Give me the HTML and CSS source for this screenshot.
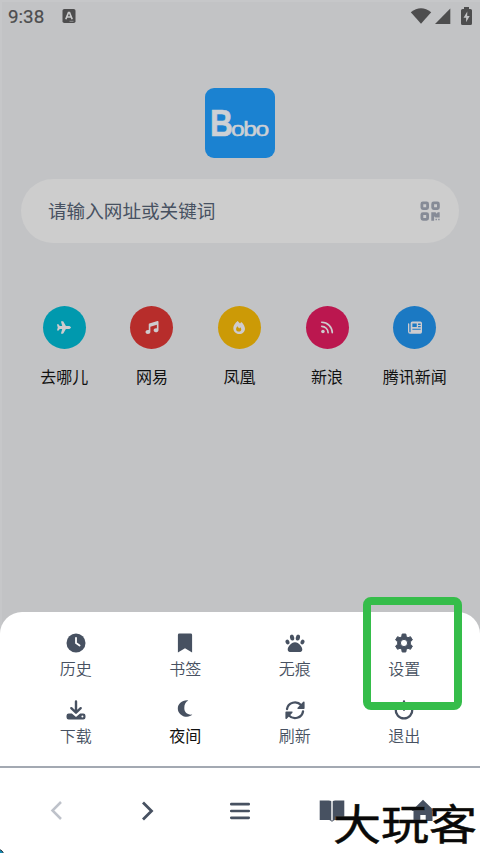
FILE: index.html
```html
<!DOCTYPE html>
<html lang="zh-CN">
<head>
<meta charset="utf-8">
<meta name="viewport" content="width=device-width">
<title>Bobo</title>
<link rel="stylesheet" href="styles.css">
</head>
<body>
<div class="screen">
  <header class="status">
    <span class="time">9:38</span>
    <svg class="badge" viewBox="0 0 14 14"><rect width="13" height="14" x=".5" rx="1.8" fill="#4d4d4e"/><path d="M3.8 10.200 6.500 3.500h1l2.700 6.700M4.800 8h4.400" fill="none" stroke="#c9cacb" stroke-width="1.700"/><path d="M7.500 12.300h4" stroke="#929394"/></svg>
    <div class="signals">
      <svg width="22" height="16" viewBox="0 0 22 16"><path d="M.8 4.200Q11-3.600 21.200 4.200L11 15.700Z" fill="#4d4d4e"/></svg>
      <svg class="cell" width="16" height="16" viewBox="0 0 16 16"><path d="M0 16 15.300.4V16Z" fill="#4d4d4e"/></svg>
      <svg class="battery" width="11" height="18" viewBox="0 0 11 18"><path d="M3 0h5v2h1.500Q11 2 11 3.500v13Q11 18 9.500 18h-8Q0 18 0 16.500v-13Q0 2 1.500 2H3Z" fill="#4d4d4e"/><path d="M6.300 4.500 2.500 10.700h2.600v4.500l3.600-6.300H6.200Z" fill="#c2c3c5"/></svg>
    </div>
  </header>

  <main class="home">
    <div class="logo"><span class="logo-b">B</span><span class="logo-rest">obo</span></div>
    <div class="search">
      <span class="hint">请输入网址或关键词</span>
      <svg width="20" height="20" viewBox="0 0 20 20"><g fill="none" stroke="#868b96" stroke-width="2.800"><rect x="1.900" y="1.900" width="5.700" height="5.700" rx="1"/><rect x="12.700" y="1.900" width="5.700" height="5.700" rx="1"/><rect x="1.900" y="12.600" width="5.700" height="5.700" rx="1"/></g><path d="M11.300 11.200h4.200l1.200 1.600 1-1.600h2v5.300h-4.300l-1.300-1.200v4.500h-2.800Z" fill="#868b96"/><path d="M15.500 18.500h1.400m1.300 0h1.400" stroke="#868b96" stroke-width="1.500"/></svg>
    </div>
    <nav class="sites">
      <a class="site"><i class="dot cyan"><svg viewBox="0 0 576 512"><path d="M482 192c29 0 94 29 94 64 0 36-65 64-94 64H366L265 496c-6 10-16 16-28 16h-56c-11 0-18-10-15-20l49-172H112l-43 58c-3 4-8 6-13 6H14c-8 0-14-6-14-14l1-4 31-112L1 144l-1-4c0-8 6-14 14-14h42c5 0 10 2 13 6l43 60h103L166 20c-3-10 4-20 15-20h56c12 0 22 6 28 16l101 176Z"/></svg></i><span>去哪儿</span></a>
      <a class="site"><i class="dot red"><svg viewBox="0 0 512 512"><path d="M499 6c8 6 13 16 13 26v336c0 44-43 80-96 80s-96-36-96-80 43-80 96-80c11 0 22 2 32 5V147L192 223v209c0 44-43 80-96 80S0 476 0 432s43-80 96-80c11 0 22 2 32 5V128c0-14 9-26 23-31L471 1c10-3 20-1 28 5Z"/></svg></i><span>网易</span></a>
      <a class="site"><i class="dot yellow"><svg viewBox="0 0 448 512"><path fill-rule="evenodd" d="M159 5c6-6 16-6 23 0 31 29 60 61 86 95 11-16 25-33 40-47 6-6 16-6 22 0 39 37 71 85 93 129 22 44 37 88 37 120 0 116-99 210-227 210C99 512 0 417 0 276c0-43 17-92 46-140C74 90 113 45 159 5Zm67 411c49 0 87-34 87-80 0-33-18-62-40-91l-41 52-72-93c-31 40-51 75-51 119 0 58 49 93 117 93Z"/></svg></i><span>凤凰</span></a>
      <a class="site"><i class="dot pink"><svg viewBox="0 0 16 16"><circle cx="3" cy="13" r="2.200"/><path d="M1.500 6.600A8 8 0 0 1 9.400 14.500M1.500 1.500A13 13 0 0 1 14.500 14.500" fill="none" stroke="#cecbce" stroke-width="2" stroke-linecap="round"/></svg></i><span>新浪</span></a>
      <a class="site"><i class="dot blue"><svg viewBox="0 0 16 14"><path fill-rule="evenodd" d="M5 0h9q2 0 2 2v10q0 2-2 2H2.500Q0 14 0 11.500V3q0-1 .7-1t.8 1v8.500q0 1 .75 1t.75-1V2q0-2 2-2Zm0 2.500v4h5v-4Zm6.500 0V4h3V2.500Zm0 2.800v1.400h3V5.300ZM5 8.300v1.200h9.500V8.300Z"/></svg></i><span>腾讯新闻</span></a>
    </nav>
  </main>

  <section class="sheet">
    <div class="menu">
      <a class="item"><svg viewBox="0 0 20 20"><circle cx="10" cy="10" r="9.500"/><path d="M10 4.800V10l3.600 2.500" fill="none" stroke="#fff" stroke-width="1.800" stroke-linecap="round"/></svg><span>历史</span></a>
      <a class="item"><svg viewBox="0 0 20 20"><path d="M4.300.5h11.400q1.400 0 1.400 1.400v17.600L10 15.200l-7.100 4.300V1.900Q2.900.5 4.300.5Z"/></svg><span>书签</span></a>
      <a class="item"><svg viewBox="0 0 20 20"><ellipse cx="7.100" cy="4.600" rx="2.100" ry="3" transform="rotate(-12 7.100 4.600)"/><ellipse cx="12.900" cy="4.600" rx="2.100" ry="3" transform="rotate(12 12.900 4.600)"/><ellipse cx="2.500" cy="9" rx="1.900" ry="2.500" transform="rotate(-22 2.500 9)"/><ellipse cx="17.500" cy="9" rx="1.900" ry="2.500" transform="rotate(22 17.500 9)"/><path d="M10 9.200c4 0 7.300 4.800 7.300 7.300 0 3-2.800 2.600-4.300 2.500q-3-.2-6 0c-1.500.1-4.300.5-4.300-2.500 0-2.500 3.300-7.300 7.300-7.300Z"/></svg><span>无痕</span></a>
      <a class="item"><svg viewBox="0 0 20 20"><path fill-rule="evenodd" stroke="#475161" stroke-linejoin="round" d="M8.200 1h3.600l.5 2.700 1.700 1 2.500-1 1.900 3.200-2.100 1.900v2.400l2.100 1.900-1.900 3.200-2.500-1-1.700 1-.5 2.700H8.200l-.5-2.700-1.700-1-2.500 1-1.900-3.200 2.100-1.900V8.800L1.600 6.900l1.900-3.200 2.500 1 1.700-1ZM10 6.400a3.600 3.600 0 1 0 0 7.200 3.600 3.600 0 0 0 0-7.200Z"/></svg><span>设置</span></a>
      <a class="item"><svg viewBox="0 0 20 20"><path d="M10 1.400v11M5.300 8.200 10 12.700l4.700-4.500" fill="none" stroke="#475161" stroke-width="2.400" stroke-linecap="round" stroke-linejoin="round"/><path fill-rule="evenodd" d="M2.700 13.500h3.200L10 16.900l4.100-3.400h3.200q2.200 0 2.200 2.200v1.600q0 2.200-2.200 2.200H2.700Q.5 19.500.5 17.300v-1.600q0-2.200 2.200-2.200Zm13.700 2a1 1 0 1 0 0 2 1 1 0 0 0 0-2Z"/></svg><span>下载</span></a>
      <a class="item dark"><svg viewBox="0 0 20 20"><path d="M12 .2C6.700.2 2.800 3.900 2.800 8.400s3.900 8.300 9.200 8.300c2.100 0 3.900-.8 5.300-2.100-5 .6-8-2.200-8-6.500 0-3.600 1.200-6 4-7.500Q12.700.2 12 .2Z"/></svg><span>夜间</span></a>
      <a class="item"><svg viewBox="0 0 20 20"><g fill="none" stroke="#475161" stroke-width="2.300" stroke-linecap="round"><path d="M2 9C3 2.500 11.500.1 16.300 5.300M18 11.500c-1 6.500-9.500 8.900-14.300 3.700"/></g><path d="M18.200 1.800q1.400-.8 1.400.8v5.600q0 .8-.8.8h-5.600q-1.500 0-.6-1.200ZM1.800 18.700q-1.400.8-1.400-.8v-5.600q0-.8.800-.8h5.600q1.500 0 .6 1.200Z"/></svg><span>刷新</span></a>
      <a class="item"><svg viewBox="0 0 20 20"><path d="M10 1.500v8.300M5 3.500a8.300 8.300 0 1 0 10 0" fill="none" stroke="#475161" stroke-width="2.300" stroke-linecap="round"/></svg><span>退出</span></a>
    </div>
    <nav class="toolbar">
      <a><svg viewBox="0 0 24 24"><path d="M16 3 7.500 11.500 16 20" fill="none" stroke="#bec2ca" stroke-width="2.500"/></svg></a>
      <a><svg viewBox="0 0 24 24"><path d="m7 3.500 8.500 8.500L7 20.500" fill="none" stroke="#475161" stroke-width="2.800"/></svg></a>
      <a><svg viewBox="0 0 24 24"><path d="M3.300 5.200h17.400M3.300 12h17.400M3.300 18.800h17.400" stroke="#475161" stroke-width="2.700" stroke-linecap="round"/></svg></a>
      <a><svg class="book" viewBox="0 0 26 24"><path d="M.7 1.500h9q2 0 2.600.7v19.500q-.8-.7-2.600-.7h-9ZM25.300 1.500h-9q-2 0-2.600.7v19.500q.8-.7 2.600-.7h9Z"/><path d="m11 20.500 2 1.900 2-1.900" fill="none" stroke="#475161"/></svg></a>
      <a><svg viewBox="0 0 24 24"><path d="M12 .7 23.500 12h-2v10h-6.800v-6H9.300v6H2.500V12h-2Z"/></svg></a>
    </nav>
  </section>
  <div class="highlight"></div>
  <div class="watermark">大玩客</div>
  <div class="corner"></div>
</div>
</body>
</html>
```
FILE: styles.css
```css
* { box-sizing: border-box; }
body { margin: 0; font-family: "Noto Sans CJK SC", sans-serif; }
svg { display: block; flex: none; }
.screen { position: relative; width: 480px; height: 853px; overflow: hidden; display: flex; flex-direction: column; background: #c2c3c5; box-shadow: inset 2px 2px #c6c7c9; }
.status { height: 34px; padding: 0 8px; display: flex; align-items: center; color: #4d4d4e; }
.time { width: 54px; font: 400 18.800px/34px Roboto, sans-serif; -webkit-text-stroke: .2px #4d4d4e; }
.badge { width: 14px; height: 14px; margin-top: -2px; }
.signals { display: flex; align-items: center; margin-left: auto; margin-top: -2px; }
.cell { margin-left: 3px; }
.battery { margin-left: 10px; }
.home { flex: 1; display: flex; flex-direction: column; align-items: center; padding-top: 54px; }
.logo { width: 70px; height: 70px; border-radius: 9px; background: #1b82d1; color: #cdd0d4; display: flex; align-items: baseline; padding-left: 5px; font-family: "Liberation Sans", sans-serif; line-height: 71px; }
.logo-b { width: 21px; font-size: 36px; font-weight: 700; -webkit-text-stroke: .6px #cdd0d4; transform: scaleX(.88); transform-origin: left; }
.logo-rest { font-size: 20.500px; font-weight: 400; letter-spacing: -1.200px; -webkit-text-stroke: .5px #cdd0d4; transform: scaleX(1.200); transform-origin: left; }
.search { width: 438px; height: 64px; margin-top: 21px; padding: 0 19px 0 27px; border-radius: 32px; background: #cdcdcd; color: #475161; display: flex; align-items: center; justify-content: space-between; font-size: 18.600px; }
.hint { margin-top: -4px; }
.sites { width: 438px; margin: 63px 1px 0 0; display: grid; grid-template-columns: repeat(5, 1fr); }
.site { display: flex; flex-direction: column; align-items: center; gap: 15px; font-size: 16px; line-height: 24px; color: #111; white-space: nowrap; }
.dot { width: 43px; height: 43px; border-radius: 50%; display: flex; align-items: center; justify-content: center; }
.dot svg { width: 14px; height: 13px; fill: #cecbce; }
.cyan { background: #0099ae; }
.red { background: #b72d2b; }
.yellow { background: #cc9a06; }
.pink { background: #bb174f; }
.blue { background: #1b79c3; }
.sheet { height: 241px; background: #fff; border-radius: 22px 22px 0 0; }
.menu { height: 156px; padding: 21px 21px 0; display: grid; grid-template-columns: repeat(4, 1fr); grid-template-rows: 67px 67px; border-bottom: 2px solid #a3a9b2; }
.item { display: flex; flex-direction: column; align-items: center; gap: 3px; color: #475161; font-size: 16px; font-weight: 350; line-height: 24px; }
.item svg { width: 20px; height: 20px; fill: #475161; }
.dark { color: #111; font-weight: 400; }
.toolbar { height: 85px; padding: 0 11px; display: grid; grid-template-columns: repeat(5, 1fr); align-items: center; justify-items: center; }
.toolbar svg { width: 24px; height: 24px; fill: #475161; }
.toolbar .book { width: 26px; }
.highlight { position: absolute; left: 363px; top: 597px; width: 99px; height: 113px; border: 8.500px solid #35bd4a; border-radius: 8px; }
.watermark { position: absolute; left: 333px; top: 787px; font-size: 48px; line-height: 70px; font-weight: 400; color: #090909; white-space: nowrap; transform: scaleY(.88); transform-origin: center; -webkit-text-stroke: .5px #090909; text-shadow: 0 0 1px #d8cda4; }
.corner { position: absolute; left: -7px; bottom: -7px; width: 11px; height: 11px; border-radius: 50%; background: #168db6; border: 1px solid #28343b; }
```
